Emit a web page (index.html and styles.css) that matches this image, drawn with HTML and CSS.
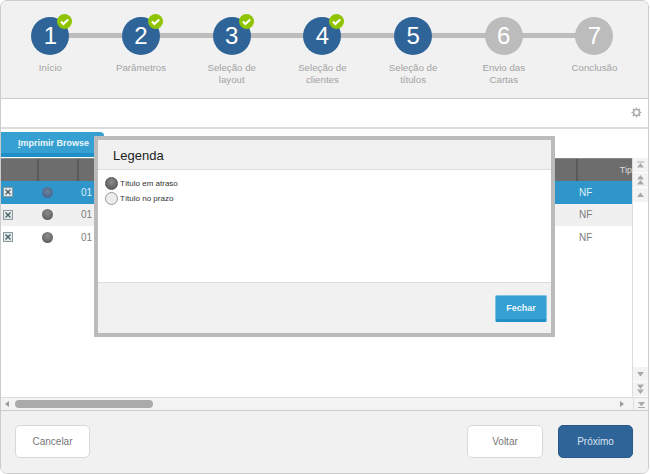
FILE: index.html
```html
<!DOCTYPE html>
<html lang="pt">
<head>
<meta charset="utf-8">
<title>Legenda</title>
<link rel="stylesheet" href="styles.css">
</head>
<body>
<svg class="defs" width="0" height="0" aria-hidden="true">
  <symbol id="check" viewBox="0 0 15 15"><circle cx="7.5" cy="7.5" r="7.5" fill="#8fc400"/><path d="M3.900 7.600l2.500 2.400 4.800-4.600" fill="none" stroke="#fff" stroke-width="2.100"/></symbol>
  <symbol id="cb" viewBox="0 0 10 10"><rect x=".5" y=".5" width="9" height="9" fill="#e3ecec" stroke="#8c989d"/><path d="M2.500 2.500l5 5M7.500 2.500l-5 5" stroke="#4d5f67" stroke-width="1.400"/></symbol>
  <symbol id="up" viewBox="0 0 9 9"><path d="M4.500 2L8 6.500H1z" fill="#aaa"/></symbol>
  <symbol id="down" viewBox="0 0 9 9"><path d="M4.500 7L8 2.500H1z" fill="#aaa"/></symbol>
  <symbol id="top" viewBox="0 0 9 9"><path d="M1 1h7v1H1zM4.500 2.500L8 7H1z" fill="#aaa"/></symbol>
  <symbol id="bottom" viewBox="0 0 9 9"><path d="M1 7h7v1H1zM4.500 6.500L8 2H1z" fill="#aaa"/></symbol>
  <symbol id="dbl-up" viewBox="0 0 9 10"><path d="M4.500 0L8 4.500H1zM4.500 5L8 9.500H1z" fill="#aaa"/></symbol>
  <symbol id="dbl-down" viewBox="0 0 9 10"><path d="M4.500 5L8 .5H1zM4.500 10L8 5.500H1z" fill="#aaa"/></symbol>
  <symbol id="gear" viewBox="0 0 12 12"><circle cx="6" cy="6" r="3.200" fill="none" stroke="#b0b0b0" stroke-width="1.700"/><path d="M6 .5v2.200M6 9.300v2.200M.5 6h2.200M9.300 6h2.200M2.100 2.100l1.600 1.600M8.300 8.300l1.600 1.600M9.900 2.100L8.300 3.700M3.700 8.300L2.100 9.900" stroke="#b0b0b0" stroke-width="1.700"/></symbol>
</svg>
<div class="wizard">
  <header class="steps">
    <div class="step done"><div class="circle">1<svg class="badge"><use href="#check"/></svg></div><span class="label">Início</span></div>
    <div class="step done"><div class="circle">2<svg class="badge"><use href="#check"/></svg></div><span class="label">Parâmetros</span></div>
    <div class="step done"><div class="circle">3<svg class="badge"><use href="#check"/></svg></div><span class="label">Seleção de layout</span></div>
    <div class="step done"><div class="circle">4<svg class="badge"><use href="#check"/></svg></div><span class="label">Seleção de clientes</span></div>
    <div class="step done"><div class="circle">5</div><span class="label">Seleção de títulos</span></div>
    <div class="step"><div class="circle">6</div><span class="label">Envio das Cartas</span></div>
    <div class="step"><div class="circle">7</div><span class="label">Conclusão</span></div>
  </header>
  <div class="toolbar">
    <svg class="gear"><use href="#gear"/></svg>
  </div>
  <main class="content">
    <div class="actions"><button class="browse-btn"><u>I</u>mprimir Browse</button></div>
    <div class="grid-wrap">
      <div class="grid">
        <div class="row head"><span class="c1"></span><span class="c2"></span><span class="c3"></span><span class="c4">Tip</span></div>
        <div class="row selected"><span class="c1"><svg class="cb"><use href="#cb"/></svg></span><span class="c2"><i class="dot blue"></i></span><span class="c3">01</span><span class="c4">NF</span></div>
        <div class="row alt"><span class="c1"><svg class="cb"><use href="#cb"/></svg></span><span class="c2"><i class="dot"></i></span><span class="c3">01</span><span class="c4">NF</span></div>
        <div class="row"><span class="c1"><svg class="cb"><use href="#cb"/></svg></span><span class="c2"><i class="dot"></i></span><span class="c3">01</span><span class="c4">NF</span></div>
      </div>
      <div class="vscroll">
        <div class="sbtn"><svg><use href="#top"/></svg></div>
        <div class="sbtn"><svg><use href="#dbl-up"/></svg></div>
        <div class="sbtn"><svg><use href="#up"/></svg></div>
        <div class="sfill"></div>
        <div class="sbtn"><svg><use href="#down"/></svg></div>
        <div class="sbtn"><svg><use href="#dbl-down"/></svg></div>
      </div>
    </div>
    <div class="hscroll">
      <span class="arrow-left"></span>
      <div class="hthumb"></div>
      <span class="arrow-right"></span>
      <div class="corner"><svg><use href="#bottom"/></svg></div>
    </div>
  </main>
  <footer class="footer">
    <button class="btn">Cancelar</button>
    <div class="footer-right">
      <button class="btn back">Voltar</button>
      <button class="btn primary">Próximo</button>
    </div>
  </footer>
  <section class="modal">
    <h2 class="modal-title">Legenda</h2>
    <div class="modal-body">
      <div class="legend"><i class="dot large"></i>Título em atraso</div>
      <div class="legend"><i class="dot large light"></i>Título no prazo</div>
    </div>
    <div class="modal-foot"><button class="close-btn">Fechar</button></div>
  </section>
</div>
</body>
</html>
```
FILE: styles.css
```css
* { box-sizing: border-box; }
html, body { margin: 0; height: 100%; background: #fff; }
body { font-family: "Liberation Sans", Arial, sans-serif; overflow: hidden; }
.defs { position: absolute; }
button { font-family: inherit; cursor: pointer; }

.wizard {
  position: relative;
  width: 649px;
  height: 474px;
  border: 1px solid #ccc;
  border-radius: 7px;
  display: flex;
  flex-direction: column;
  overflow: hidden;
}

/* steps */
.steps {
  height: 98px;
  flex: none;
  background: #f1f1f1;
  border-bottom: 1px solid #ccc;
  display: flex;
  padding: 16px 9px 0 4px;
}
.step {
  flex: 0 0 90.7px;
  display: flex;
  flex-direction: column;
  align-items: center;
  position: relative;
}
.step::after {
  content: "";
  position: absolute;
  top: 16px;
  left: 50%;
  width: 100%;
  height: 5px;
  background: #bdbdbd;
}
.step:last-child::after { display: none; }
.circle {
  position: relative;
  z-index: 1;
  width: 38px;
  height: 38px;
  border-radius: 50%;
  background: #bcbcbc;
  color: #fff;
  font-size: 24px;
  line-height: 38px;
  text-align: center;
}
.done .circle { background: #2f6498; }
.badge { position: absolute; top: -3px; left: 26px; width: 15px; height: 15px; }
.label {
  width: 70px;
  margin-top: 7px;
  font-size: 9.700px;
  line-height: 11.500px;
  text-align: center;
  color: #a3a3a3;
}

/* toolbar */
.toolbar {
  height: 30px;
  flex: none;
  border-bottom: 2px solid #ddd;
  display: flex;
  align-items: center;
  justify-content: flex-end;
  padding: 0 6px 1px 0;
}
.gear { width: 11px; height: 11px; }

/* content */
.content { flex: 1; display: flex; flex-direction: column; min-height: 0; }
.actions { height: 29px; flex: none; padding-top: 3px; }
.browse-btn {
  display: block;
  width: 104px;
  height: 25px;
  padding: 0 0 0 18px;
  margin-left: -1px;
  border: 0;
  border-bottom: 4px solid #1f8fc6;
  border-radius: 0 4px 4px 0;
  background: #36a0d3;
  color: #eaf6fb;
  font-size: 9px;
  font-weight: bold;
  text-align: left;
}
.grid-wrap { flex: 1; display: flex; min-height: 0; }
.grid { flex: 1; min-width: 0; border-right: 1px solid #ddd; margin-left: -1px; }
.row { display: flex; height: 22.500px; align-items: center; font-size: 10px; color: #7d7d7d; }
.row span { height: 100%; display: flex; align-items: center; }
.head { height: 23px; background: #6d6d6d; color: #ddd; border-top: 1px solid #8a8a8a; font-size: 9px; }
.head span { border-right: 2px solid #5a5a5a; }
.head .c4 { border-right: 0; justify-content: flex-end; border-left: 2px solid #5a5a5a; padding: 0; }
.head .c3 { border-right: 0; }
.selected { background: #2e96cb; color: #dff0f8; }
.alt { background: #f0f0f0; }
.c1 { width: 39px; padding-left: 3px; }
.c2 { width: 40px; padding-left: 3px; }
.c3 { flex: 1; padding-left: 2px; }
.c4 { width: 56px; padding-left: 3px; }
.cb { width: 10px; height: 10px; }
.dot {
  display: block;
  width: 11px;
  height: 11px;
  border-radius: 50%;
  background: radial-gradient(circle at 50% 35%, #8b8b8b, #555);
}
.dot.blue { background: radial-gradient(circle at 50% 40%, #6d7f96, #3d5f92); }
.dot.large { width: 13px; height: 13px; border: 1px solid #555; margin-right: 2px; flex: none; }
.dot.light { background: #ececec; border-color: #999; }

.vscroll { width: 15px; flex: none; display: flex; flex-direction: column; }
.sbtn {
  height: 15px;
  display: flex;
  align-items: center;
  justify-content: center;
  background: #f3f3f3;
  border-bottom: 1px solid #fff;
}
.sbtn svg { width: 9px; height: 10px; }
.sfill { flex: 1; }

.hscroll {
  height: 14px;
  flex: none;
  display: flex;
  align-items: center;
  background: #f3f3f3;
  border-top: 1px solid #ddd;
  border-bottom: 1px solid #ccc;
}
.arrow-left { width: 0; height: 0; margin: 0 6px 0 4px; border: 3.500px solid transparent; border-left: 0; border-right: 4px solid #999; }
.hthumb { width: 138px; height: 8px; border-radius: 4px; background: #aaa; }
.arrow-right { margin-left: auto; margin-right: 9px; width: 0; height: 0; border: 3.500px solid transparent; border-right: 0; border-left: 4px solid #999; }
.corner { width: 15px; height: 100%; display: flex; align-items: center; justify-content: center; background: #f3f3f3; border-left: 1px solid #ddd; }
.corner svg { width: 9px; height: 9px; }

/* footer */
.footer {
  height: 62px;
  flex: none;
  background: #f1f1f1;
  display: flex;
  justify-content: space-between;
  align-items: flex-start;
  padding: 14px 15px 0 14px;
}
.footer-right { display: flex; gap: 15px; }
.btn {
  width: 75px;
  height: 33px;
  border: 1px solid #d8d8d8;
  border-radius: 5px;
  background: #fff;
  color: #777;
  font-size: 10px;
  padding: 0;
}
.back { width: 76px; }
.primary { background: #2f6498; border-color: #2a5a8a; color: #d8e4ef; }

/* modal */
.modal {
  position: absolute;
  left: 93px;
  top: 135px;
  width: 461px;
  height: 201px;
  border: 4px solid #bbb;
  background: #fff;
  display: flex;
  flex-direction: column;
}
.modal-title {
  margin: 0;
  height: 30px;
  flex: none;
  background: #f1f1f1;
  border-bottom: 1px solid #ddd;
  padding-left: 15px;
  font-size: 13px;
  font-weight: normal;
  line-height: 31px;
  color: #222;
}
.modal-body { flex: 1; padding: 6px 7px; }
.legend { display: flex; align-items: center; height: 15px; font-size: 8px; color: #333; }
.modal-foot {
  height: 51px;
  flex: none;
  background: #f1f1f1;
  border-top: 1px solid #ddd;
  display: flex;
  justify-content: flex-end;
  padding: 12px 4px 0 0;
}
.close-btn {
  width: 52px;
  height: 27px;
  border: 1px solid #7fc4e4;
  border-bottom: 3px solid #1f8fc6;
  border-radius: 2px;
  background: #36a0d3;
  color: #eaf6fb;
  font-size: 9px;
  font-weight: bold;
  padding: 0;
}
```
